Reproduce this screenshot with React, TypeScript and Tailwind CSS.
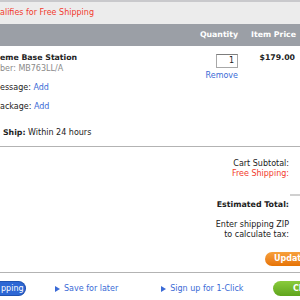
const blue = "text-[#3a6ad6]";

const Triangle = () => (
  <svg width="5" height="6" viewBox="0 0 5 6" className="mr-[4px] shrink-0">
    <path d="M0 0 L5 3 L0 6 Z" fill="#3a6ad6" />
  </svg>
);

export default function App() {
  return (
    <div
      className="w-[300px] h-[300px] overflow-hidden bg-white text-[8px] text-[#222]"
      style={{ fontFamily: '"DejaVu Sans", "Liberation Sans", sans-serif' }}
    >
      {/* shipping notice */}
      <div className="h-[2px] bg-[#c9c9cc]" />
      <div className="h-[22px] bg-[#ececec] flex items-center text-[#f23b2c] whitespace-nowrap">
        alifies for Free Shipping
      </div>

      {/* column headings */}
      <div className="h-[22px] bg-[#9b9fa6] flex items-center justify-end pr-[4px] text-white font-bold text-[7.8px] whitespace-nowrap">
        <span>Quantity</span>
        <span className="ml-[13px]">Item Price</span>
      </div>

      {/* item row */}
      <div className="flex">
        <div className="flex-1 pt-[6px] pb-[8px] whitespace-nowrap">
          <div className="h-[11px] leading-[11px] font-bold text-[7.8px]">eme Base Station</div>
          <div className="h-[11px] leading-[11px] text-[#8a8a8a]">ber: MB763LL/A</div>
          <div className="h-[11px] leading-[11px] mt-[8px]">
            essage: <span className={blue}>Add</span>
          </div>
          <div className="h-[11px] leading-[11px] mt-[8px]">
            ackage: <span className={blue}>Add</span>
          </div>
          <div className="h-[11px] leading-[11px] mt-[15px] pl-[3px]">
            <span className="font-bold text-[7.8px]">Ship:</span> Within 24 hours
          </div>
        </div>
        <div className="flex flex-col items-end pt-[8px]">
          <div className="w-[22px] h-[14px] border border-[#a8a8a8] border-t-[#7d7d7d] bg-white flex items-center justify-end pr-[3px] text-[8px] leading-none">
            1
          </div>
          <div className={`mt-[3px] leading-[10px] ${blue}`}>Remove</div>
        </div>
        <div className="w-[57px] mr-[5px] pt-[7px] text-right font-bold text-[7.8px] leading-[10px]">
          $179.00
        </div>
      </div>

      <div className="h-px bg-[#b3b3b3]" />

      {/* totals */}
      <div className="flex h-[125px]">
        <div className="flex-1 flex flex-col items-end text-right whitespace-nowrap leading-[10px]">
          <div className="mt-[12px]">Cart Subtotal:</div>
          <div className="text-[#f23b2c]">Free Shipping:</div>
          <div className="mt-[21px] font-bold text-[7.9px]">Estimated Total:</div>
          <div className="mt-[10px]">Enter shipping ZIP</div>
          <div>to calculate tax:</div>
        </div>
        <div className="w-[11px] shrink-0 flex flex-col">
          <div className="mt-[47px] h-[2px] ml-px bg-[#d0d0d0]" />
          <div className="mt-[56px] -ml-[24px] w-[60px] h-[14px] rounded-l-full bg-gradient-to-b from-[#f7a03a] to-[#e67300] text-white font-bold text-[8px] leading-[14px] pl-[9px] whitespace-nowrap">
            Update
          </div>
        </div>
      </div>

      <div className="h-px bg-[#b3b3b3]" />

      {/* actions */}
      <div className="flex items-center pt-[8px] whitespace-nowrap">
        <div className="h-[15px] w-[26px] rounded-r-full bg-[#2d67d4] border border-[#1f52b0] border-l-0 text-white text-[8px] leading-[13px] pl-px">
          pping
        </div>
        <div className={`ml-[29px] flex items-center ${blue}`}>
          <Triangle />
          Save for later
        </div>
        <div className={`ml-[43px] flex items-center ${blue}`}>
          <Triangle />
          Sign up for 1-Click
        </div>
        <div className="ml-auto w-[27px] h-[15px] shrink-0 overflow-hidden">
          <div className="w-[60px] h-[15px] rounded-l-full bg-gradient-to-b from-[#8acb3c] to-[#5fa51c] text-white font-bold text-[8px] leading-[15px] pl-[20px]">
            Check Out
          </div>
        </div>
      </div>
    </div>
  );
}
